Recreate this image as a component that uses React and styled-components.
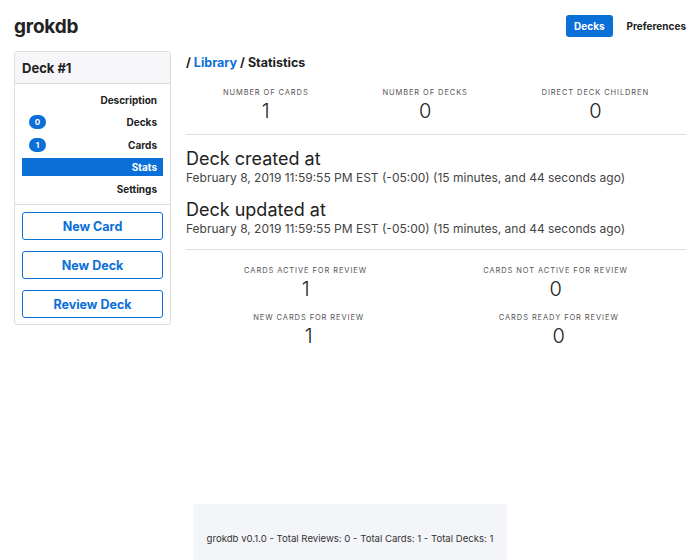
import React from 'react';
import styled, { createGlobalStyle } from 'styled-components';

const GlobalStyle = createGlobalStyle`
  body {
    margin: 0;
    font-family: Inter, "Noto Sans", sans-serif;
    color: #222;
    background: white;
  }
`;

const blue = '#0b6fd8';

const Page = styled.div`
  min-height: 100vh;
  display: flex;
  flex-direction: column;
`;

const Header = styled.header`
  display: flex;
  align-items: center;
  justify-content: space-between;
  padding: 13px 14px 0 14px;
  height: 26px;
`;

const Logo = styled.h1`
  margin: 0;
  font-size: 19px;
  font-weight: 700;
  letter-spacing: -0.2px;
`;

const Nav = styled.nav`
  display: flex;
  align-items: center;
  gap: 14px;
`;

const NavLink = styled.a`
  font-size: 10px;
  font-weight: 700;
  line-height: 12px;
  padding: 5px ${p => (p.$active ? '8px' : '0')};
  border-radius: 3px;
  color: ${p => (p.$active ? 'white' : '#222')};
  background: ${p => (p.$active ? blue : 'transparent')};
`;

const Body = styled.div`
  display: flex;
  align-items: flex-start;
  gap: 15px;
  padding: 12px 14px 0 14px;
`;

const Sidebar = styled.aside`
  width: 155px;
  border: 1px solid #dcdde0;
  border-radius: 3px;
  flex-shrink: 0;
`;

const SidebarTitle = styled.div`
  background: #f6f6f8;
  border-bottom: 1px solid #dcdde0;
  padding: 0 7px;
  height: 31px;
  display: flex;
  align-items: center;
  font-size: 13px;
  font-weight: 700;
`;

const Menu = styled.ul`
  list-style: none;
  margin: 0;
  padding: 7px 7px 6px 7px;
  display: flex;
  flex-direction: column;
  gap: 4.3px;
  border-bottom: 1px solid #dcdde0;
`;

const MenuItem = styled.li`
  display: flex;
  align-items: center;
  height: 18px;
  padding: 0 6px;
  font-size: 10px;
  font-weight: 700;
  color: ${p => (p.$active ? 'white' : '#222')};
  background: ${p => (p.$active ? blue : 'transparent')};
`;

const Badge = styled.span`
  display: inline-flex;
  align-items: center;
  justify-content: center;
  min-width: 15px;
  height: 14px;
  padding: 0 1px;
  border-radius: 8px;
  background: ${blue};
  color: white;
  font-size: 8px;
  font-weight: 700;
  margin-left: 1px;
`;

const Label = styled.span`
  margin-left: auto;
`;

const Actions = styled.div`
  display: flex;
  flex-direction: column;
  gap: 11px;
  padding: 7px 7px 6px 7px;
`;

const ActionButton = styled.button`
  height: 28px;
  border: 1px solid ${blue};
  border-radius: 3px;
  background: white;
  color: ${blue};
  font-family: inherit;
  font-size: 12.5px;
  font-weight: 700;
  cursor: pointer;
`;

const Main = styled.main`
  flex: 1;
  min-width: 0;
`;

const Crumbs = styled.div`
  font-size: 12.5px;
  font-weight: 700;
  line-height: 16px;
  margin-top: 4px;
  a {
    color: ${blue};
  }
`;

const StatRow = styled.div`
  display: flex;
  padding-top: ${p => p.$top || '0'};
`;

const Stat = styled.div`
  flex: 1 1 auto;
  display: flex;
  flex-direction: column;
  align-items: center;
`;

const StatLabel = styled.div`
  font-size: 7.5px;
  letter-spacing: 0.9px;
  text-transform: uppercase;
  color: #555;
  line-height: 12px;
`;

const StatValue = styled.div`
  font-size: 20px;
  font-weight: 300;
  line-height: 25px;
  color: #222;
`;

const Rule = styled.hr`
  border: none;
  border-top: 1px solid #dedfe2;
  margin: ${p => p.$margin};
`;

const Heading = styled.div`
  font-size: 18px;
  font-weight: 400;
  line-height: 23px;
  color: #222;
`;

const Stamp = styled.div`
  font-size: 12px;
  color: #444;
  line-height: 16px;
  margin-bottom: 12px;
`;

const Footer = styled.footer`
  margin: auto auto 0 auto;
  background: #f4f5f9;
  padding: 28px 14px 14px 14px;
  font-size: 9.6px;
  line-height: 14px;
  color: #333;
  text-align: center;
`;

const menu = [
  { label: 'Description' },
  { label: 'Decks', count: 0 },
  { label: 'Cards', count: 1 },
  { label: 'Stats', active: true },
  { label: 'Settings' }
];

const stamp = 'February 8, 2019 11:59:55 PM EST (-05:00) (15 minutes, and 44 seconds ago)';

export default function App() {
  return (
    <Page>
      <GlobalStyle />
      <Header>
        <Logo>grokdb</Logo>
        <Nav>
          <NavLink $active>Decks</NavLink>
          <NavLink>Preferences</NavLink>
        </Nav>
      </Header>
      <Body>
        <Sidebar>
          <SidebarTitle>Deck #1</SidebarTitle>
          <Menu>
            {menu.map(item => (
              <MenuItem key={item.label} $active={item.active}>
                {item.count !== undefined && <Badge>{item.count}</Badge>}
                <Label>{item.label}</Label>
              </MenuItem>
            ))}
          </Menu>
          <Actions>
            <ActionButton>New Card</ActionButton>
            <ActionButton>New Deck</ActionButton>
            <ActionButton>Review Deck</ActionButton>
          </Actions>
        </Sidebar>
        <Main>
          <Crumbs>
            / <a>Library</a> / Statistics
          </Crumbs>
          <StatRow $top="16px">
            <Stat>
              <StatLabel>Number of cards</StatLabel>
              <StatValue>1</StatValue>
            </Stat>
            <Stat>
              <StatLabel>Number of decks</StatLabel>
              <StatValue>0</StatValue>
            </Stat>
            <Stat>
              <StatLabel>Direct deck children</StatLabel>
              <StatValue>0</StatValue>
            </Stat>
          </StatRow>
          <Rule $margin="10px 0 12px 0" />
          <Heading>Deck created at</Heading>
          <Stamp>{stamp}</Stamp>
          <Heading>Deck updated at</Heading>
          <Stamp>{stamp}</Stamp>
          <Rule $margin="4px 0 15px 0" />
          <StatRow>
            <Stat>
              <StatLabel>Cards active for review</StatLabel>
              <StatValue>1</StatValue>
            </Stat>
            <Stat>
              <StatLabel>Cards not active for review</StatLabel>
              <StatValue>0</StatValue>
            </Stat>
          </StatRow>
          <StatRow $top="10px">
            <Stat>
              <StatLabel>New cards for review</StatLabel>
              <StatValue>1</StatValue>
            </Stat>
            <Stat>
              <StatLabel>Cards ready for review</StatLabel>
              <StatValue>0</StatValue>
            </Stat>
          </StatRow>
        </Main>
      </Body>
      <Footer>grokdb v0.1.0 - Total Reviews: 0 - Total Cards: 1 - Total Decks: 1</Footer>
    </Page>
  );
}
